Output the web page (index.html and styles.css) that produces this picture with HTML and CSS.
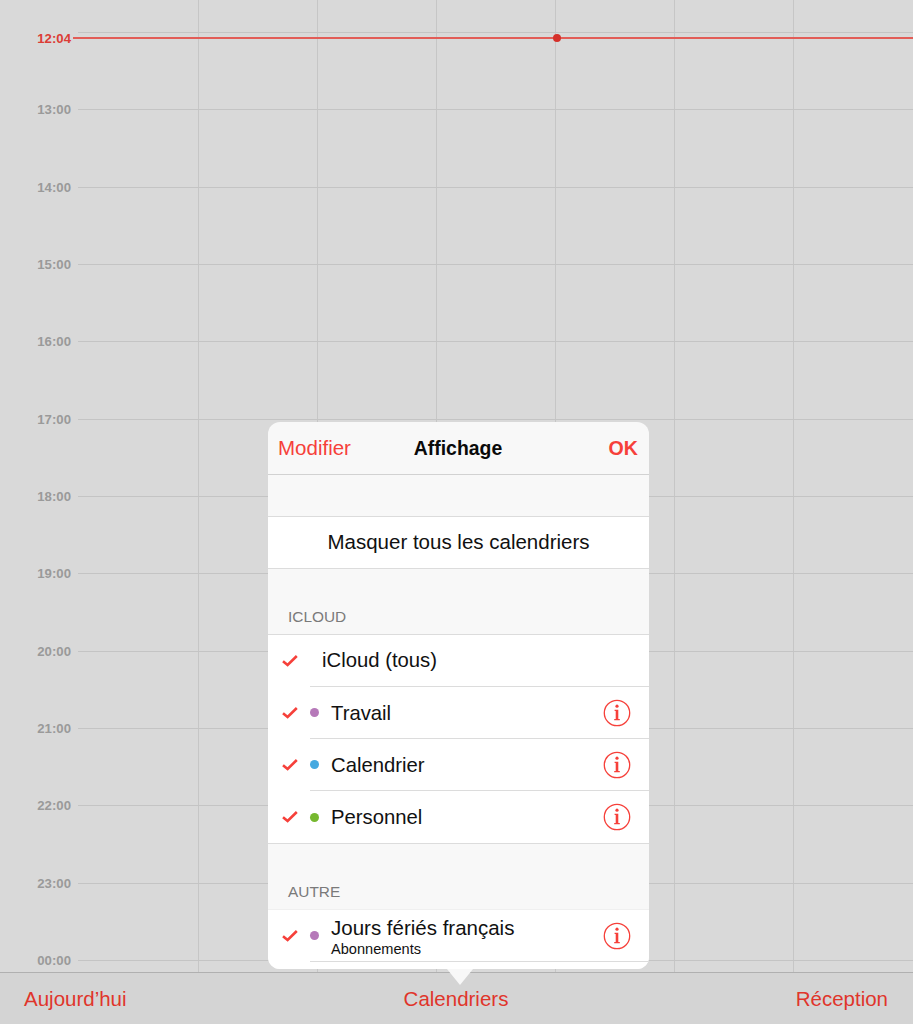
FILE: index.html
```html
<!DOCTYPE html>
<html lang="fr">
<head>
<meta charset="utf-8">
<title>Calendrier</title>
<link rel="stylesheet" href="styles.css">
</head>
<body>
<svg class="defs" width="0" height="0" aria-hidden="true">
  <symbol id="check" viewBox="0 0 16 12"><path d="M1 6.2 L5.6 10 L14.8 1" fill="none" stroke="currentColor" stroke-width="2.6"/></symbol>
  <symbol id="info" viewBox="0 0 28 28">
    <circle cx="14" cy="14" r="12.7" fill="none" stroke="currentColor" stroke-width="1.3"/>
    <circle cx="14" cy="7.2" r="1.6" fill="currentColor"/>
    <path d="M11.6 10.8 H15.3 V20 H16.8 V21.2 H11.2 V20 H12.7 V12 H11.6 Z" fill="currentColor"/>
  </symbol>
</svg>
<main class="calendar">
  <div class="columns">
    <div class="column"></div><div class="column"></div><div class="column"></div>
    <div class="column"></div><div class="column"></div><div class="column"></div>
    <div class="column"></div>
  </div>
  <div class="hours">
    <div class="hour"><span class="hour-label"></span><span class="hour-line"></span></div>
    <div class="hour"><span class="hour-label">13:00</span><span class="hour-line"></span></div>
    <div class="hour"><span class="hour-label">14:00</span><span class="hour-line"></span></div>
    <div class="hour"><span class="hour-label">15:00</span><span class="hour-line"></span></div>
    <div class="hour"><span class="hour-label">16:00</span><span class="hour-line"></span></div>
    <div class="hour"><span class="hour-label">17:00</span><span class="hour-line"></span></div>
    <div class="hour"><span class="hour-label">18:00</span><span class="hour-line"></span></div>
    <div class="hour"><span class="hour-label">19:00</span><span class="hour-line"></span></div>
    <div class="hour"><span class="hour-label">20:00</span><span class="hour-line"></span></div>
    <div class="hour"><span class="hour-label">21:00</span><span class="hour-line"></span></div>
    <div class="hour"><span class="hour-label">22:00</span><span class="hour-line"></span></div>
    <div class="hour"><span class="hour-label">23:00</span><span class="hour-line"></span></div>
    <div class="hour"><span class="hour-label">00:00</span><span class="hour-line"></span></div>
  </div>
  <div class="now">
    <span class="now-label">12:04</span>
    <span class="now-line"></span>
    <span class="now-dot"></span>
  </div>
</main>
<footer class="toolbar">
  <span class="tool tool-left">Aujourd’hui</span>
  <span class="tool">Calendriers</span>
  <span class="tool tool-right">Réception</span>
</footer>
<section class="popover">
  <header class="pop-header">
    <span class="pop-action">Modifier</span>
    <span class="pop-title">Affichage</span>
    <span class="pop-action pop-ok">OK</span>
  </header>
  <div class="pop-scroll">
    <div class="group hide-all">Masquer tous les calendriers</div>
    <h2 class="section-title">ICLOUD</h2>
    <div class="group">
      <div class="row">
        <svg class="check"><use href="#check"/></svg>
        <div class="row-body"><span class="name name-all">iCloud (tous)</span></div>
      </div>
      <div class="row">
        <svg class="check"><use href="#check"/></svg>
        <div class="row-body"><span class="dot dot-purple"></span><span class="name">Travail</span><svg class="info"><use href="#info"/></svg></div>
      </div>
      <div class="row">
        <svg class="check"><use href="#check"/></svg>
        <div class="row-body"><span class="dot dot-blue"></span><span class="name">Calendrier</span><svg class="info"><use href="#info"/></svg></div>
      </div>
      <div class="row row-last">
        <svg class="check"><use href="#check"/></svg>
        <div class="row-body"><span class="dot dot-green"></span><span class="name">Personnel</span><svg class="info"><use href="#info"/></svg></div>
      </div>
    </div>
    <h2 class="section-title">AUTRE</h2>
    <div class="group group-open">
      <div class="row">
        <svg class="check"><use href="#check"/></svg>
        <div class="row-body"><span class="dot dot-purple"></span>
          <span class="name-stack"><span class="name name-long">Jours fériés français</span><span class="sub">Abonnements</span></span>
          <svg class="info"><use href="#info"/></svg>
        </div>
      </div>
    </div>
  </div>
</section>
<span class="pop-arrow"></span>
</body>
</html>
```

FILE: styles.css
```css
* { box-sizing: border-box; }
html, body { margin: 0; height: 100%; }
body {
  position: relative;
  width: 913px;
  height: 1024px;
  overflow: hidden;
  display: flex;
  flex-direction: column;
  background: #d9d9d9;
  font-family: "Liberation Sans", Arial, sans-serif;
}
.defs { position: absolute; }

.calendar {
  position: relative;
  flex: 1;
  overflow: hidden;
  background: #d9d9d9;
}
.columns {
  position: absolute;
  inset: 0;
  display: flex;
  padding-left: 198px;
}
.column {
  flex: 0 0 119.1px;
  border-left: 1px solid #c6c6c6;
}
.hours {
  position: relative;
  margin-top: -6px;
}
.hour {
  height: 77.33px;
  display: flex;
  align-items: center;
}
.hour-label {
  width: 71px;
  text-align: right;
  font-size: 13.2px;
  font-weight: 700;
  color: #9a9a9a;
}
.hour-line {
  flex: 1;
  height: 1px;
  margin-left: 7px;
  background: #c4c4c4;
}
.now {
  position: absolute;
  top: 30px;
  left: 0;
  right: 0;
  height: 16px;
  display: flex;
  align-items: center;
}
.now-label {
  width: 71px;
  text-align: right;
  font-size: 13.2px;
  font-weight: 700;
  color: #dc3d36;
}
.now-line {
  flex: 1;
  height: 1.4px;
  margin-left: 2px;
  background: #e25d57;
}
.now-dot {
  position: absolute;
  left: 552.5px;
  top: 3.5px;
  width: 8px;
  height: 8px;
  border-radius: 50%;
  background: #d5302a;
}

.toolbar {
  flex: 0 0 52px;
  display: grid;
  grid-template-columns: 1fr auto 1fr;
  align-items: center;
  padding: 0 25px 0 24px;
  background: #d4d4d4;
  border-top: 1px solid #b0b0b0;
  font-size: 20.5px;
  color: #e0352b;
}
.tool-right { text-align: right; }

.popover {
  position: absolute;
  left: 268px;
  top: 422px;
  width: 381px;
  height: 547px;
  border-radius: 12px;
  overflow: hidden;
  background: #f8f8f8;
  color: #111;
  font-size: 20.5px;
}
.pop-arrow {
  position: absolute;
  left: 447px;
  top: 969px;
  width: 0;
  height: 0;
  border-left: 13px solid transparent;
  border-right: 13px solid transparent;
  border-top: 16px solid #f8f8f8;
}
.pop-header {
  height: 53px;
  display: grid;
  grid-template-columns: 1fr auto 1fr;
  align-items: center;
  padding: 0 11px 0 10px;
  border-bottom: 1px solid #d2d2d2;
}
.pop-action { color: #f6403a; }
.pop-ok { font-size: 19.6px; font-weight: 700; text-align: right; }
.pop-title { font-size: 19.4px; font-weight: 700; color: #0a0a0a; }
.pop-scroll { padding-top: 41px; }
.group {
  background: #fff;
  border-top: 1px solid #dcdcdc;
  border-bottom: 1px solid #dcdcdc;
}
.group-open { border-top-color: #f0f0f0; border-bottom: 0; padding-bottom: 20px; }
.hide-all {
  height: 53px;
  display: flex;
  align-items: center;
  justify-content: center;
  padding-bottom: 1px;
}
.section-title {
  margin: 0;
  height: 65px;
  display: flex;
  align-items: flex-end;
  padding: 0 0 8px 20px;
  font-size: 15.4px;
  font-weight: 400;
  color: #7a7a7a;
}
.row {
  height: 52.1px;
  display: flex;
  padding-left: 14px;
  color: #f6403a;
}
.check {
  flex: 0 0 16px;
  width: 16px;
  height: 12px;
  margin-right: 12px;
  align-self: center;
}
.row-body {
  flex: 1;
  display: flex;
  align-items: center;
  padding-right: 18px;
  border-bottom: 1px solid #dcdcdc;
}
.row-last .row-body { border-bottom: 0; }
.dot {
  flex: 0 0 9px;
  height: 9px;
  border-radius: 50%;
  margin-right: 12px;
}
.dot-purple { background: #b679b9; }
.dot-blue { background: #46a9e0; }
.dot-green { background: #76b82f; }
.name { color: #111; flex: 1; padding-top: 1px; font-size: 20.3px; }
.name-all { padding: 0 0 1px 12px; }
.name-long { font-size: 20.5px; }
.name-stack {
  flex: 1;
  display: flex;
  flex-direction: column;
}
.sub {
  margin-top: 1px;
  font-size: 14.6px;
  color: #111;
}
.info {
  flex: 0 0 28px;
  width: 28px;
  height: 28px;
}
```
